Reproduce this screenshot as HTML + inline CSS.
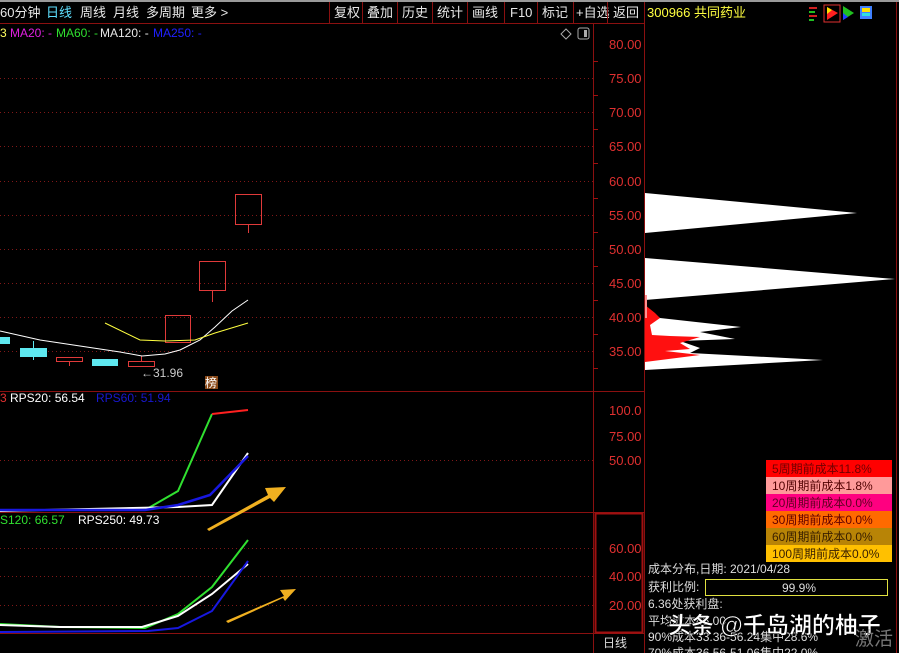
<!DOCTYPE html>
<html><head><meta charset="utf-8"><style>
html,body{margin:0;padding:0;background:#000;width:899px;height:653px;overflow:hidden}
svg{display:block}
text{font-family:"Liberation Sans","Noto Sans CJK SC",sans-serif;font-size:12px}
</style></head><body>
<svg width="899" height="653" viewBox="0 0 899 653" xmlns="http://www.w3.org/2000/svg">
<rect width="899" height="653" fill="#000"/>
<rect x="0" y="0" width="899" height="2" fill="#9a9a9a"/>
<g fill="#e8e8e8">
<text x="0" y="17" style="font-size:13px">60分钟</text>
<text x="46" y="17" fill="#5ee0ff" style="font-size:13px">日线</text>
<text x="80" y="17" style="font-size:13px">周线</text>
<text x="113" y="17" style="font-size:13px">月线</text>
<text x="146" y="17" style="font-size:13px">多周期</text>
<text x="191" y="17" style="font-size:13px">更多 &gt;</text>
<text x="334" y="17" style="font-size:13px">复权</text>
<text x="367" y="17" style="font-size:13px">叠加</text>
<text x="402" y="17" style="font-size:13px">历史</text>
<text x="437" y="17" style="font-size:13px">统计</text>
<text x="472" y="17" style="font-size:13px">画线</text>
<text x="510" y="17" style="font-size:13px">F10</text>
<text x="542" y="17" style="font-size:13px">标记</text>
<text x="576" y="17" style="font-size:13px">+自选</text>
<text x="613" y="17" style="font-size:13px">返回</text>
</g>
<g stroke="#8a1010" stroke-width="1">
<line x1="329.5" y1="2" x2="329.5" y2="23"/><line x1="362.5" y1="2" x2="362.5" y2="23"/>
<line x1="397.5" y1="2" x2="397.5" y2="23"/><line x1="432.5" y1="2" x2="432.5" y2="23"/>
<line x1="467.5" y1="2" x2="467.5" y2="23"/><line x1="504.5" y1="2" x2="504.5" y2="23"/>
<line x1="537.5" y1="2" x2="537.5" y2="23"/><line x1="573.5" y1="2" x2="573.5" y2="23"/>
<line x1="607.5" y1="2" x2="607.5" y2="23"/>
<line x1="0" y1="23.5" x2="644" y2="23.5"/>
<line x1="593.5" y1="23" x2="593.5" y2="653"/>
<line x1="644.5" y1="2" x2="644.5" y2="653"/>
<line x1="896.5" y1="2" x2="896.5" y2="653"/>
<line x1="0" y1="391.5" x2="644" y2="391.5"/>
<line x1="0" y1="512.5" x2="644" y2="512.5"/>
<line x1="0" y1="633.5" x2="644" y2="633.5"/>
</g>
<rect x="595.5" y="513.5" width="47" height="119" fill="none" stroke="#a01010" stroke-width="2"/>
<text x="647" y="17" fill="#ffff40" style="font-size:13px">300966 共同药业</text>
<g>
<rect x="809" y="7" width="8" height="2" fill="#d02020"/><rect x="809" y="11" width="6" height="2" fill="#20c020"/><rect x="809" y="15" width="8" height="2" fill="#d02020"/><rect x="809" y="19" width="5" height="2" fill="#20c020"/>
<rect x="824" y="5" width="16" height="17" fill="none" stroke="#e03030"/>
<polygon points="827,7 838,13 827,20" fill="#ff2020"/><polygon points="827,7 832,10 827,14" fill="#ffe000"/>
<polygon points="843,6 854,13 843,20" fill="#20c020"/><polygon points="843,13 848,17 843,20" fill="#2040ff"/>
<rect x="860" y="6" width="12" height="13" fill="#4080ff"/><rect x="862" y="8" width="8" height="4" fill="#ffe000"/><rect x="862" y="13" width="8" height="3" fill="#30e0e0"/>
</g>
<text x="0" y="37" fill="#ffff60">3</text>
<text x="10" y="37" fill="#e020e0">MA20: -</text>
<text x="56" y="37" fill="#30e030">MA60: -</text>
<text x="100" y="37" fill="#e8e8e8">MA120: -</text>
<text x="153" y="37" fill="#2020ff">MA250: -</text>
<polygon points="566,29 571,34 566,39 561,34" fill="none" stroke="#aaa"/>
<rect x="578" y="28" width="11" height="11" rx="2" fill="none" stroke="#aaa"/><rect x="584" y="30" width="3" height="7" fill="#aaa"/>
<g stroke="#801818" stroke-dasharray="1,3" stroke-width="1">
<line x1="0" y1="78.5" x2="593" y2="78.5"/><line x1="0" y1="112.5" x2="593" y2="112.5"/>
<line x1="0" y1="146.5" x2="593" y2="146.5"/><line x1="0" y1="181.5" x2="593" y2="181.5"/>
<line x1="0" y1="215.5" x2="593" y2="215.5"/><line x1="0" y1="249.5" x2="593" y2="249.5"/>
<line x1="0" y1="283.5" x2="593" y2="283.5"/><line x1="0" y1="317.5" x2="593" y2="317.5"/>
<line x1="0" y1="351.5" x2="593" y2="351.5"/>
<line x1="0" y1="460.5" x2="593" y2="460.5"/>
<line x1="0" y1="548.5" x2="593" y2="548.5"/><line x1="0" y1="576.5" x2="593" y2="576.5"/><line x1="0" y1="605.5" x2="593" y2="605.5"/>
</g>
<g fill="#e03030">
<text x="609" y="49" style="font-size:13px">80.00</text><text x="609" y="83" style="font-size:13px">75.00</text>
<text x="609" y="117" style="font-size:13px">70.00</text><text x="609" y="151" style="font-size:13px">65.00</text>
<text x="609" y="186" style="font-size:13px">60.00</text><text x="609" y="220" style="font-size:13px">55.00</text>
<text x="609" y="254" style="font-size:13px">50.00</text><text x="609" y="288" style="font-size:13px">45.00</text>
<text x="609" y="322" style="font-size:13px">40.00</text><text x="609" y="356" style="font-size:13px">35.00</text>
<text x="609" y="415" style="font-size:13px">100.0</text><text x="609" y="441" style="font-size:13px">75.00</text>
<text x="609" y="465" style="font-size:13px">50.00</text>
<text x="609" y="553" style="font-size:13px">60.00</text><text x="609" y="581" style="font-size:13px">40.00</text>
<text x="609" y="610" style="font-size:13px">20.00</text>
</g>
<g stroke="#a01010"><line x1="593" y1="61.5" x2="598" y2="61.5"/><line x1="593" y1="95.5" x2="598" y2="95.5"/><line x1="593" y1="129.5" x2="598" y2="129.5"/><line x1="593" y1="163.5" x2="598" y2="163.5"/><line x1="593" y1="198.5" x2="598" y2="198.5"/><line x1="593" y1="232.5" x2="598" y2="232.5"/><line x1="593" y1="266.5" x2="598" y2="266.5"/><line x1="593" y1="300.5" x2="598" y2="300.5"/><line x1="593" y1="334.5" x2="598" y2="334.5"/><line x1="593" y1="368.5" x2="598" y2="368.5"/></g>
<text x="603" y="647" fill="#ddd">日线</text>
<g fill="#5ee8f0"><rect x="0" y="337" width="10" height="7"/><rect x="20" y="348" width="27" height="9"/><rect x="92" y="359" width="26" height="7"/></g>
<line x1="33.5" y1="341" x2="33.5" y2="360" stroke="#5ee8f0"/>
<g fill="none" stroke="#e03a3a">
<rect x="56.5" y="357.5" width="26" height="4"/><line x1="69.5" y1="362" x2="69.5" y2="366"/>
<rect x="128.5" y="361.5" width="26" height="5"/><line x1="141.5" y1="356" x2="141.5" y2="361"/>
<rect x="165.5" y="315.5" width="25" height="27"/>
<rect x="199.5" y="261.5" width="26" height="29"/><line x1="212.5" y1="291" x2="212.5" y2="302"/>
<rect x="235.5" y="194.5" width="26" height="30"/><line x1="248.5" y1="225" x2="248.5" y2="233"/>
</g>
<polyline points="0,331 40,340 80,346 120,352 142,356 165,354 180,350 200,340 215,327 232,311 248,300" fill="none" stroke="#fff" stroke-width="1"/>
<polyline points="105,323 140,340 165,341 195,340 215,333 248,323" fill="none" stroke="#ffff40" stroke-width="1"/>
<text x="141" y="377" fill="#ccc">←31.96</text>
<rect x="205" y="376" width="13" height="13" fill="#8a4a1a"/><text x="205" y="387" fill="#fff">榜</text>
<text x="0" y="402" fill="#e03030">3</text>
<text x="10" y="402" fill="#fff">RPS20: 56.54</text>
<text x="96" y="402" fill="#1818d0">RPS60: 51.94</text>
<polyline points="0,510 145,510 178,491 212,414" fill="none" stroke="#30e030" stroke-width="2"/>
<polyline points="212,414 248,410" fill="none" stroke="#ff2020" stroke-width="2"/>
<polyline points="0,511 178,507 212,505 248,453" fill="none" stroke="#fff" stroke-width="2"/>
<polyline points="0,510 145,510 178,505 210,495 248,456" fill="none" stroke="#1818e0" stroke-width="2.5"/>
<polygon points="207,529 268,495 265,488 286,487 274,502 270,498 209,531" fill="#f0b020"/>
<text x="0" y="524" fill="#30e030">S120: 66.57</text>
<text x="78" y="524" fill="#fff">RPS250: 49.73</text>
<polyline points="0,624 60,627 145,628 178,614 212,587 248,540" fill="none" stroke="#30e030" stroke-width="2"/>
<polyline points="0,625 60,627 142,627 178,616 212,594 248,564" fill="none" stroke="#fff" stroke-width="2"/>
<polyline points="0,632 148,631 178,628 212,611 248,561" fill="none" stroke="#1818e0" stroke-width="2"/>
<polygon points="226,621 284,596 280,590 296,589 285,601 283,598 228,623" fill="#f0b020"/>
<polygon points="645,193 857,213 645,233" fill="#fff"/>
<polygon points="645,258 895,279 645,300" fill="#fff"/>
<polygon points="645,310 660,318 741,327 700,332 735,339 680,341 700,348 690,353 823,360 645,370" fill="#fff"/>
<polygon points="645,305 655,313 660,318 650,325 652,335 670,336 700,337 680,343 690,349 665,351 700,355 645,362" fill="#ff1010"/>
<polygon points="645,295 647,295 647,318 645,318" fill="#ff9090"/>
<g>
<rect x="766" y="460" width="126" height="17" fill="#ff0000"/><text x="772" y="473" fill="#700000">5周期前成本11.8%</text>
<rect x="766" y="477" width="126" height="17" fill="#ff9a9a"/><text x="772" y="490" fill="#500000">10周期前成本1.8%</text>
<rect x="766" y="494" width="126" height="17" fill="#ff0080"/><text x="772" y="507" fill="#600020">20周期前成本0.0%</text>
<rect x="766" y="511" width="126" height="17" fill="#ff6a00"/><text x="772" y="524" fill="#600000">30周期前成本0.0%</text>
<rect x="766" y="528" width="126" height="17" fill="#b88406"/><text x="772" y="541" fill="#3a2000">60周期前成本0.0%</text>
<rect x="766" y="545" width="126" height="17" fill="#ffc000"/><text x="772" y="558" fill="#3a2000">100周期前成本0.0%</text>
</g>
<g fill="#ddd">
<text x="648" y="573">成本分布,日期: 2021/04/28</text>
<text x="648" y="591">获利比例:</text>
<rect x="705.5" y="579.5" width="182" height="16" fill="none" stroke="#e0e040"/>
<text x="782" y="592">99.9%</text>
<text x="648" y="608">6.36处获利盘:</text>
<text x="648" y="625">平均成本45.00</text>
<text x="648" y="641">90%成本33.36-56.24集中28.6%</text>
<text x="648" y="657">70%成本36.56-51.06集中22.0%</text>
</g>
<text x="668" y="633" fill="#fff" style="font-size:23px;font-weight:bold;stroke:#000;stroke-width:0.6">头条 @千岛湖的柚子</text>
<text x="855" y="645" fill="#777" style="font-size:19px">激活</text>
</svg>
</body></html>
